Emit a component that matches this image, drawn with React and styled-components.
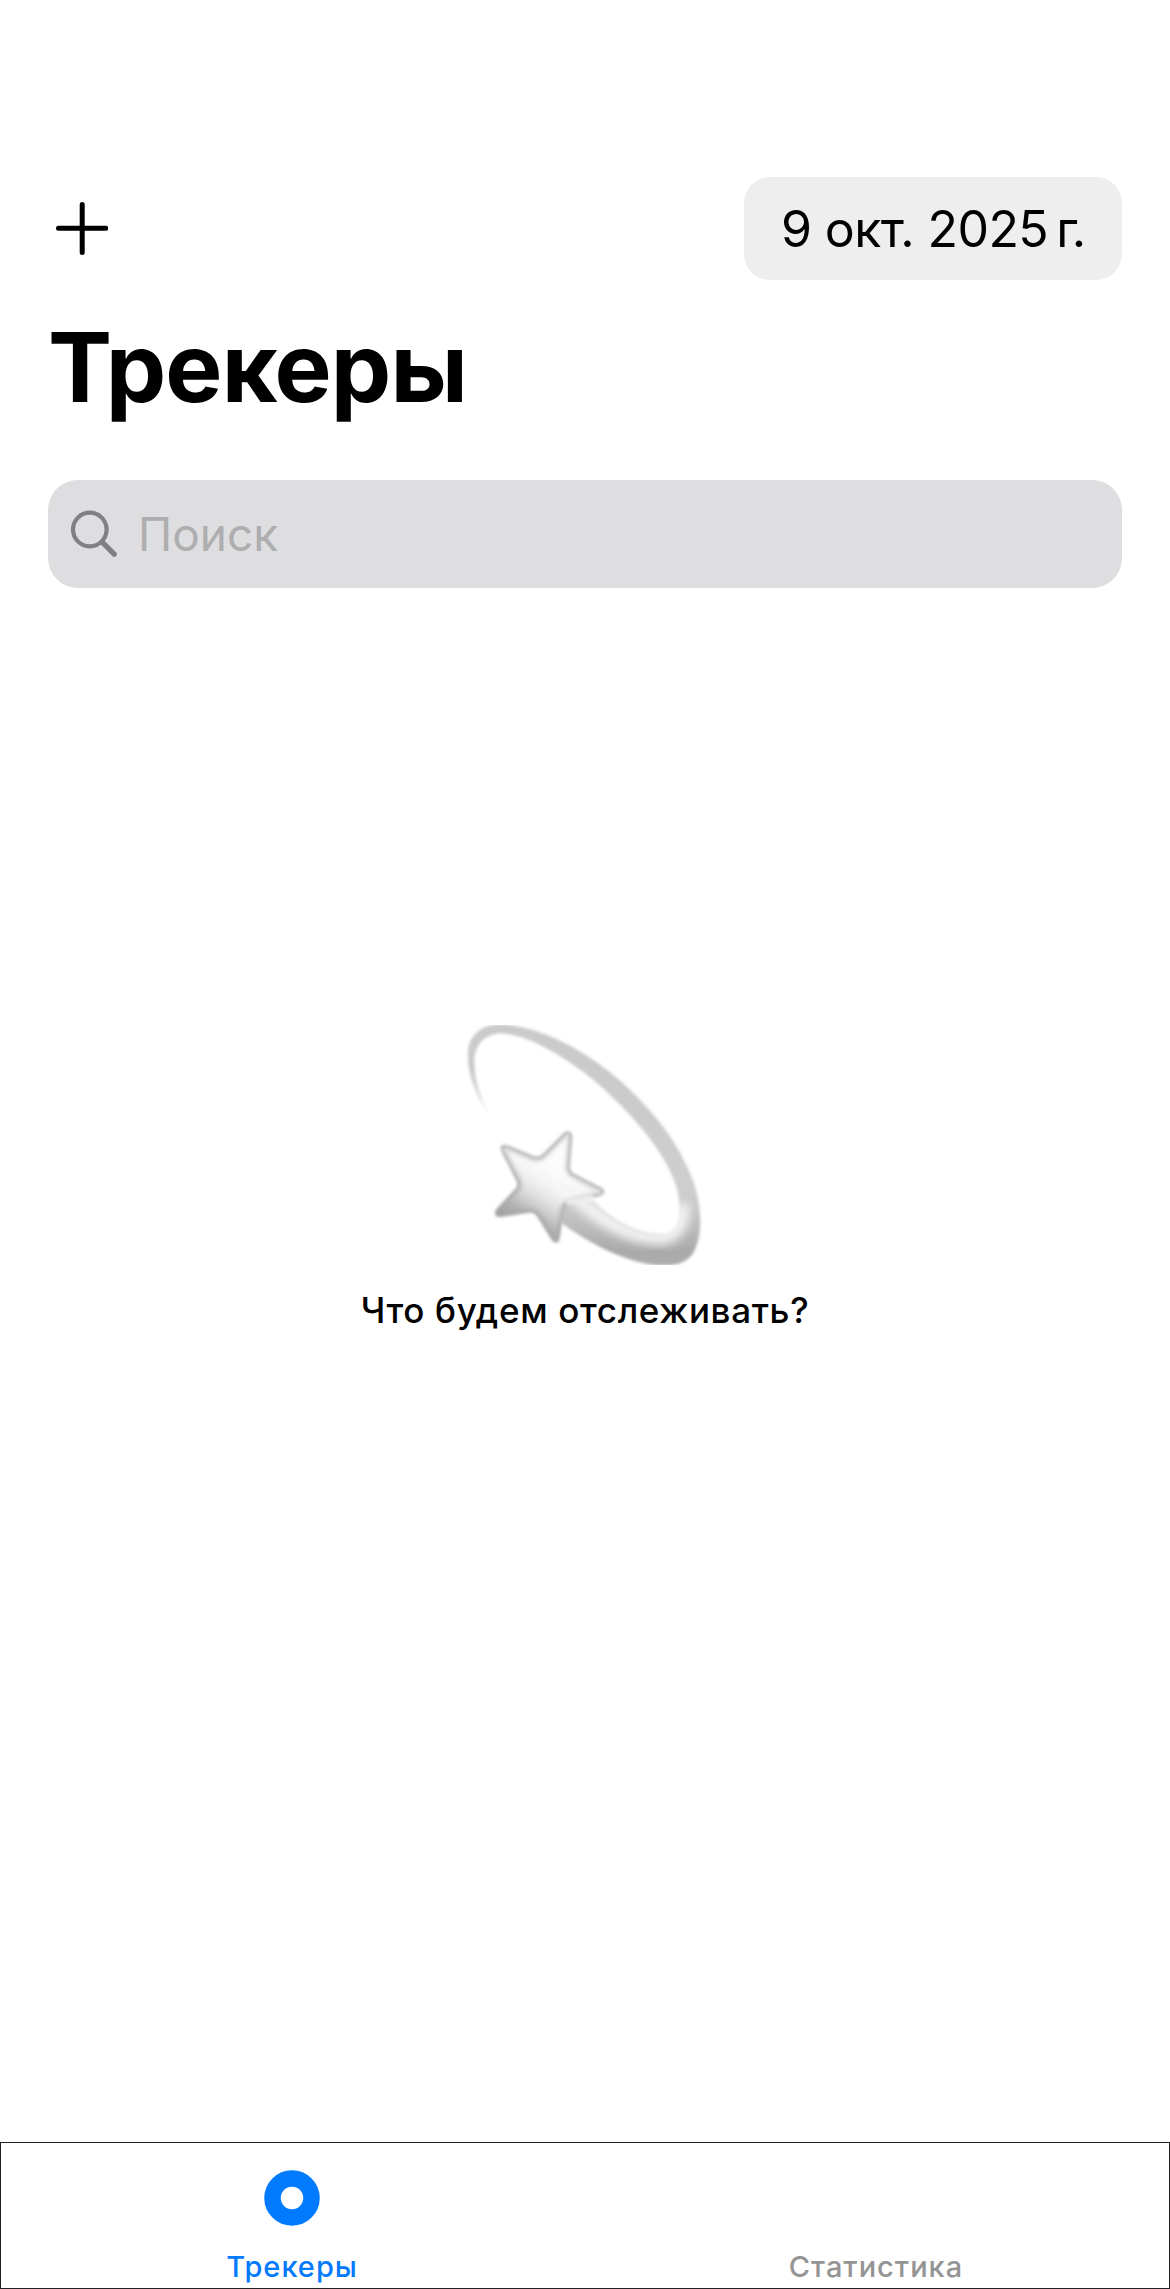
import React from "react";
import styled, { createGlobalStyle } from "styled-components";

const GlobalStyle = createGlobalStyle`
  *, *::before, *::after { box-sizing: border-box; }
  body { margin: 0; background: #fff; }
`;

const Screen = styled.div`
  width: 1170px;
  height: 2289px;
  display: flex;
  flex-direction: column;
  background: #fff;
  color: #000;
  font-family: Inter, "Liberation Sans", sans-serif;
  overflow: hidden;
`;

const NavBar = styled.header`
  display: flex;
  justify-content: space-between;
  align-items: center;
  padding: 177px 48px 0 56px;
`;

const AddButton = styled.button`
  display: flex;
  padding: 0;
  border: 0;
  background: none;
  color: #000;
`;

const DateField = styled.div`
  width: 378px;
  height: 103px;
  padding: 0 0 0 37px;
  border-radius: 26px;
  background: #eeeeee;
  display: flex;
  align-items: center;
  white-space: pre;
  font-size: 50px;
  line-height: 104px;
  letter-spacing: -0.6px;
`;

const Year = styled.span`
  margin-right: 8px;
`;

const YearUnit = styled.span`
  letter-spacing: -3px;
`;

const Title = styled.h1`
  margin: 29px 0 0;
  padding-left: 48px;
  font-size: 96px;
  line-height: 116px;
  font-weight: 700;
  letter-spacing: -0.9px;
`;

const SearchField = styled.label`
  display: flex;
  align-items: center;
  height: 108px;
  margin: 55px 48px 0;
  padding-left: 22px;
  border-radius: 30px;
  background: #dedee0;
  color: #7f7f84;
`;

const SearchInput = styled.input`
  flex: 1;
  min-width: 0;
  height: 108px;
  margin-left: 16px;
  padding: 0;
  border: 0;
  outline: 0;
  background: none;
  font: 400 46px Inter, "Liberation Sans", sans-serif;
  &::placeholder { color: #aeaeb0; opacity: 1; }
`;

const EmptyState = styled.main`
  flex: 1;
  display: flex;
  flex-direction: column;
  align-items: center;
  padding-top: 437px;
`;

const EmptyText = styled.p`
  margin: 23px 0 0;
  font-size: 35px;
  line-height: 44px;
  font-weight: 500;
  letter-spacing: 0.65px;
`;

const TabBar = styled.nav`
  display: flex;
  height: 147px;
  border: 1px solid #222224;
`;

const Tab = styled.a`
  flex: 1;
  display: flex;
  flex-direction: column;
  align-items: center;
  justify-content: flex-end;
  gap: 22px;
  font-size: 29px;
  line-height: 36px;
  font-weight: 500;
  letter-spacing: 1px;
  padding: 0 2px 3px 0;
  color: ${(p) => (p.$active ? "#007aff" : "#949494")};
`;

const PlusIcon = () => (
  <svg width="52" height="54" viewBox="0 0 52 54" fill="none" stroke="currentColor" strokeWidth="5" strokeLinecap="round">
    <path d="M26.2 2.5V50.5M2.5 26.3H49.8" />
  </svg>
);

const SearchIcon = () => (
  <svg width="52" height="52" viewBox="0 0 52 52" fill="none" stroke="currentColor" strokeLinecap="round">
    <circle cx="19.8" cy="21.5" r="16.8" strokeWidth="4.2" />
    <path d="M32.2 34.2L44.2 46.2" strokeWidth="5.4" />
  </svg>
);

const TrackerIcon = () => (
  <svg width="58" height="58" viewBox="0 0 58 58" fill="none">
    <circle cx="29" cy="29" r="19.5" stroke="#007aff" strokeWidth="16.5" />
  </svg>
);

const RING =
  "M114 308C76 257 52 185 54 130C56 72 98 43 155 43C270 50 395 115 500 203C610 298 692 405 732 520C757 600 757 680 731 726C704 773 640 774 565 756C480 733 405 690 335 640L320 570L425 572C490 638 570 680 640 674C692 664 696 606 682 540C655 435 545 308 430 209C335 133 225 71 150 70C94 76 70 112 73 170C77 225 94 265 114 308Z";

const STAR =
  "M152 417C151 403 163 402 176 407L253 439Q267 443 279 432L338 372C350 359 367 362 367 381L360 472Q360 486 374 492L454 533C469 541 465 553 450 558L364 580Q346 584 342 600L329 684C326 702 314 703 304 688L263 622Q254 606 236 608L150 621C135 622 131 609 139 598L199 533Q205 523 199 512L156 428Z";

const DizzyStar = () => (
  <svg width="240" height="240" viewBox="45 45 720 720">
    <defs>
      <linearGradient id="trail" gradientUnits="userSpaceOnUse" x1="90" y1="310" x2="110" y2="190">
        <stop offset="0" stopColor="#fff" />
        <stop offset=".45" stopColor="#dedede" />
        <stop offset="1" stopColor="#c9c9c9" />
      </linearGradient>
      <linearGradient id="tube" gradientUnits="userSpaceOnUse" x1="0" y1="200" x2="0" y2="765">
        <stop offset="0" stopColor="#cacaca" />
        <stop offset=".6" stopColor="#cecece" />
        <stop offset=".78" stopColor="#bebebe" />
        <stop offset=".93" stopColor="#a9a9a9" />
        <stop offset="1" stopColor="#aeaeae" />
      </linearGradient>
      <linearGradient id="starFill" gradientUnits="userSpaceOnUse" x1="320" y1="480" x2="210" y2="650">
        <stop offset="0" stopColor="#fcfcfc" />
        <stop offset=".25" stopColor="#f4f4f4" />
        <stop offset=".45" stopColor="#e4e4e4" />
        <stop offset=".6" stopColor="#d0d0d0" />
        <stop offset=".78" stopColor="#b4b4b4" />
        <stop offset="1" stopColor="#9e9e9e" />
      </linearGradient>
      <filter id="soft" x="-10%" y="-10%" width="120%" height="120%">
        <feGaussianBlur stdDeviation="4" />
      </filter>
      <filter id="glow" x="-30%" y="-30%" width="160%" height="160%">
        <feGaussianBlur stdDeviation="14" />
      </filter>
      <clipPath id="ringClip"><path d={RING} /></clipPath>
      <clipPath id="starClip"><path d={STAR} /></clipPath>
    </defs>
    <g filter="url(#soft)">
      <path d={RING} fill="url(#tube)" />
      <g clipPath="url(#ringClip)">
        <rect x="45" y="160" width="80" height="160" fill="url(#trail)" />
        <path d="M375 560C470 645 560 688 640 682C684 674 700 630 698 580" fill="none" stroke="#f4f4f4" strokeWidth="44" filter="url(#glow)" />
      </g>
      <path d="M428 572C490 637 570 679 640 673" fill="none" stroke="#dcdcdc" strokeWidth="4" />
    </g>
    <g filter="url(#soft)">
      <path d={STAR} fill="url(#starFill)" />
      <g clipPath="url(#starClip)">
        <ellipse cx="385" cy="545" rx="60" ry="22" fill="#f4f4f4" filter="url(#glow)" />
        <path d={STAR} fill="none" stroke="#a8a8a8" strokeOpacity=".3" strokeWidth="36" />
        <path d={STAR} fill="none" stroke="#a8a8a8" strokeOpacity=".75" strokeWidth="17" />
      </g>
      <path d="M350 578L430 562" stroke="#ececec" strokeWidth="14" />
    </g>
  </svg>
);

export default function App() {
  return (
    <Screen>
      <GlobalStyle />
      <NavBar>
        <AddButton aria-label="Добавить"><PlusIcon /></AddButton>
        <DateField>9 окт. <Year>2025</Year><YearUnit>г.</YearUnit></DateField>
      </NavBar>
      <Title>Трекеры</Title>
      <SearchField>
        <SearchIcon />
        <SearchInput placeholder="Поиск" />
      </SearchField>
      <EmptyState>
        <DizzyStar />
        <EmptyText>Что будем отслеживать?</EmptyText>
      </EmptyState>
      <TabBar>
        <Tab $active><TrackerIcon />Трекеры</Tab>
        <Tab>Статистика</Tab>
      </TabBar>
    </Screen>
  );
}
